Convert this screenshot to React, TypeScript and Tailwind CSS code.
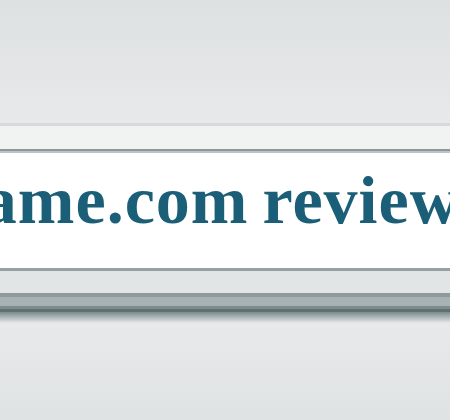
import React from 'react';

export default function App() {
    return (
        <div className="w-full h-[420px] overflow-hidden flex flex-col bg-[#e6e9ea]">
            {/* Background above */}
            <div className="h-[123px] shrink-0 bg-gradient-to-b from-[#dee1e2] to-[#e7e9ea]" />

            {/* Banner */}
            <div className="shrink-0 flex flex-col">
                <div className="h-[3px] bg-[#d5dadb]" />
                <div className="h-[23px] bg-[#f1f2f2]" />
                <div className="h-[2px] bg-[#8d9899]" />
                <div className="h-[2px] bg-[#bcc4c5]" />
                <div className="h-[115px] bg-white overflow-hidden">
                    <p
                        className="mt-[13px] ml-[-56px] whitespace-nowrap text-[68px] leading-[68px] font-bold tracking-[1px] [word-spacing:-4px] text-[#1b5e78]"
                        style={{ fontFamily: '"Liberation Serif", "Times New Roman", serif' }}
                    >
                        name.com reviews
                    </p>
                </div>
                <div className="h-[3px] bg-[#97a1a2]" />
                <div className="h-[22px] bg-[#e2e5e6]" />
                <div className="h-[4px] bg-[#8f9a9a]" />
                <div className="h-[9px] bg-[#a6b2b3]" />
                <div className="h-[3px] bg-[#7f8c8d]" />
                <div className="h-[3px] bg-[#5f7070]" />
                <div className="h-[11px] bg-gradient-to-b from-[#7d8b8c] to-[#e6e9ea]" />
            </div>

            {/* Background below */}
            <div className="flex-1 bg-gradient-to-b from-[#e7e9ea] to-[#e0e3e3]" />
        </div>
    );
}
